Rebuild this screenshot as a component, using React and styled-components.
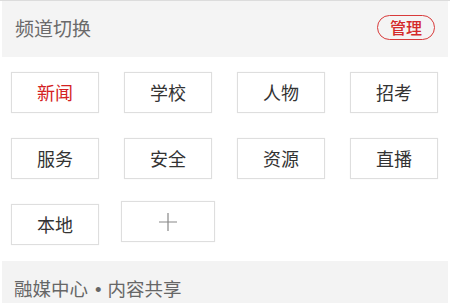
import React from "react";
import styled, { createGlobalStyle } from "styled-components";

const Global = createGlobalStyle`
  html, body { margin: 0; padding: 0; background: #fff; }
  body { font-family: "Noto Sans CJK SC", "Noto Sans", sans-serif; }
`;

const Page = styled.div`
  width: 450px;
  height: 305px;
  overflow: hidden;
  border-top: 1px solid #dcdcdc;
  padding: 0 2px;
  box-sizing: border-box;
`;

const Header = styled.div`
  height: 56px;
  box-sizing: border-box;
  background: #f4f4f4;
  display: flex;
  align-items: center;
  justify-content: space-between;
  padding: 0 13px 3px 13px;
`;

const Title = styled.div`
  font-size: 19px;
  color: #6a6a6a;
  line-height: 1;
`;

const Manage = styled.div`
  width: 58px;
  height: 25px;
  box-sizing: border-box;
  border: 1.5px solid #d83a3a;
  border-radius: 13px;
  color: #d42a2a;
  font-size: 16px;
  font-weight: 500;
  display: flex;
  align-items: center;
  justify-content: center;
  line-height: 1;
  padding-bottom: 1px;
`;

const Grid = styled.div`
  display: grid;
  grid-template-columns: repeat(4, 88px);
  grid-auto-rows: 41px;
  column-gap: 25px;
  row-gap: 25px;
  padding: 15px 0 16px 9px;
`;

const Chip = styled.div`
  box-sizing: border-box;
  border: 1px solid #dedede;
  box-shadow: 0 0 1px rgba(0, 0, 0, 0.08);
  background: #fff;
  display: flex;
  align-items: center;
  justify-content: center;
  font-size: 18px;
  line-height: 1;
  padding-bottom: 2px;
  color: ${(p) => (p.$active ? "#d42222" : "#333")};
`;

const AddChip = styled(Chip)`
  margin: -3px -3px 3px;
  height: 41px;
  padding-bottom: 0;
  color: #888;
`;

const Footer = styled.div`
  height: 42px;
  box-sizing: border-box;
  background: #f3f3f3;
  display: flex;
  align-items: flex-start;
  padding: 18px 11px 0 12px;
`;

const FooterText = styled.div`
  font-size: 18.5px;
  color: #666;
  line-height: 1;
`;

const Dot = styled.span`
  font-family: "Liberation Sans", sans-serif;
  margin: 0 6px 0 7px;
`;

const channels = ["新闻", "学校", "人物", "招考", "服务", "安全", "资源", "直播", "本地"];

export default function App() {
  return (
    <>
      <Global />
      <Page>
        <Header>
          <Title>频道切换</Title>
          <Manage>管理</Manage>
        </Header>
        <Grid>
          {channels.map((c, i) => (
            <Chip key={c} $active={i === 0}>{c}</Chip>
          ))}
          <AddChip>
            <svg width="20" height="20" viewBox="0 0 20 20">
              <path d="M10 1v18M1 10h18" stroke="#888" strokeWidth="1.2" fill="none" />
            </svg>
          </AddChip>
        </Grid>
        <Footer>
          <FooterText>融媒中心<Dot>•</Dot>内容共享</FooterText>
        </Footer>
      </Page>
    </>
  );
}
